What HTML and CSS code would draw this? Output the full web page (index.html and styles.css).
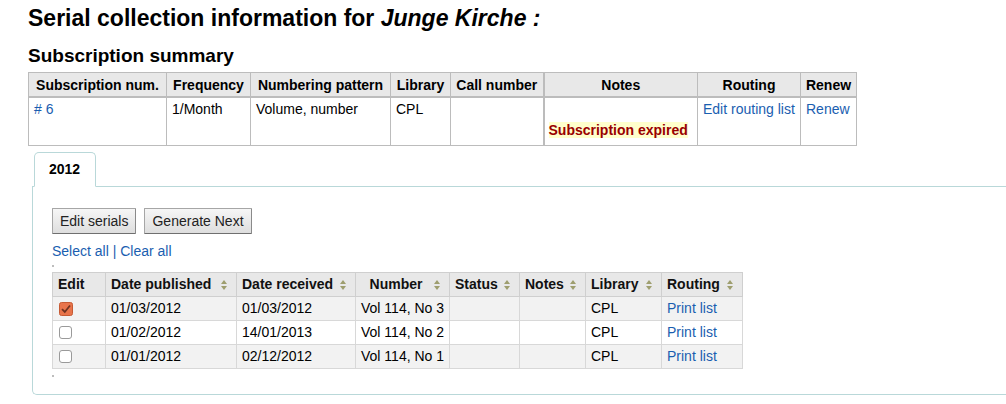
FILE: index.html
```html
<!DOCTYPE html>
<html lang="en">
<head>
<meta charset="utf-8">
<title>Serial collection information</title>
<link rel="stylesheet" href="styles.css">
</head>
<body>
<div class="page">
  <h1 class="title">Serial collection information for <i>Junge Kirche :</i></h1>
  <h2 class="subtitle">Subscription summary</h2>
  <table class="summary">
    <colgroup>
      <col class="s-c1"><col class="s-c2"><col class="s-c3"><col class="s-c4"><col class="s-c5"><col class="s-c6"><col class="s-c7"><col class="s-c8">
    </colgroup>
    <thead>
      <tr>
        <th>Subscription num.</th>
        <th>Frequency</th>
        <th>Numbering pattern</th>
        <th>Library</th>
        <th>Call number</th>
        <th class="notes-col">Notes</th>
        <th>Routing</th>
        <th>Renew</th>
      </tr>
    </thead>
    <tbody>
      <tr>
        <td><a href="#">#&nbsp;6</a></td>
        <td>1/Month</td>
        <td>Volume, number</td>
        <td>CPL</td>
        <td></td>
        <td class="notes-col"><div class="blank-line"></div><span class="problem">Subscription expired</span></td>
        <td><a href="#">Edit routing list</a></td>
        <td><a href="#">Renew</a></td>
      </tr>
    </tbody>
  </table>

  <div class="tabs">
    <ul class="tablist">
      <li class="tab">2012</li>
    </ul>
    <div class="panel">
      <div class="buttons">
        <button class="btn" type="button">Edit serials</button>
        <button class="btn" type="button">Generate Next</button>
      </div>
      <div class="selectall"><a href="#">Select all</a> | <a href="#">Clear all</a></div>
      <div class="dot"></div>
      <table class="issues">
        <colgroup>
          <col class="i-c1"><col class="i-c2"><col class="i-c3"><col class="i-c4"><col class="i-c5"><col class="i-c6"><col class="i-c7"><col class="i-c8">
        </colgroup>
        <thead>
          <tr>
            <th>Edit</th>
            <th class="sort">Date published</th>
            <th class="sort">Date received</th>
            <th class="sort center">Number</th>
            <th class="sort">Status</th>
            <th class="sort">Notes</th>
            <th class="sort">Library</th>
            <th class="sort">Routing</th>
          </tr>
        </thead>
        <tbody>
          <tr class="odd">
            <td><svg class="cb" width="14" height="14" viewBox="0 0 14 14"><rect x="0.5" y="0.5" width="13" height="13" rx="2" fill="#e8744b" stroke="#c65a34"/><path d="M3 7.2 L5.8 10 L11 3.5" fill="none" stroke="#6e3322" stroke-width="1.8"/></svg></td>
            <td>01/03/2012</td>
            <td>01/03/2012</td>
            <td>Vol 114, No 3</td>
            <td></td>
            <td></td>
            <td>CPL</td>
            <td><a href="#">Print list</a></td>
          </tr>
          <tr class="even">
            <td><svg class="cb" width="14" height="14" viewBox="0 0 14 14"><rect x="0.5" y="0.5" width="12" height="12" rx="2.5" fill="#fff" stroke="#9a9a9a"/></svg></td>
            <td>01/02/2012</td>
            <td>14/01/2013</td>
            <td>Vol 114, No 2</td>
            <td></td>
            <td></td>
            <td>CPL</td>
            <td><a href="#">Print list</a></td>
          </tr>
          <tr class="odd">
            <td><svg class="cb" width="14" height="14" viewBox="0 0 14 14"><rect x="0.5" y="0.5" width="12" height="12" rx="2.5" fill="#fff" stroke="#9a9a9a"/></svg></td>
            <td>01/01/2012</td>
            <td>02/12/2012</td>
            <td>Vol 114, No 1</td>
            <td></td>
            <td></td>
            <td>CPL</td>
            <td><a href="#">Print list</a></td>
          </tr>
        </tbody>
      </table>
      <div class="dot dot-bottom"></div>
    </div>
  </div>
</div>
</body>
</html>
```

FILE: styles.css
```css
html, body {
  margin: 0;
  padding: 0;
  overflow: hidden;
  background: #fff;
}
body {
  font-family: "Liberation Sans", Arial, sans-serif;
  font-size: 14px;
  color: #000;
}
a {
  color: #1a5eb0;
  text-decoration: none;
}
.page {
  padding-left: 28px;
}
.title {
  font-size: 23px;
  line-height: 26px;
  font-weight: bold;
  margin: 5px 0 0;
}
.subtitle {
  font-size: 19px;
  line-height: 22px;
  font-weight: bold;
  margin: 14px 0 5px;
}

/* summary table */
.summary {
  border-collapse: collapse;
  table-layout: fixed;
  width: 828px;
  border: 1px solid #bcbcbc;
}
.s-c1 { width: 138px; }
.s-c2 { width: 84px; }
.s-c3 { width: 140px; }
.s-c4 { width: 60px; }
.s-c5 { width: 93px; }
.s-c6 { width: 154px; }
.s-c7 { width: 103px; }
.s-c8 { width: 56px; }
.summary th {
  background: #e8e8e8;
  border: 1px solid #bcbcbc;
  border-bottom: 2px solid #bcbcbc;
  font-weight: bold;
  text-align: center;
  line-height: 20px;
  padding: 2px 4px 1px;
  white-space: nowrap;
}
.summary td {
  border: 1px solid #bcbcbc;
  vertical-align: top;
  line-height: 20px;
  padding: 1px 5px 5px;
  white-space: nowrap;
}
.summary .notes-col {
  border-left: 2px solid #bcbcbc;
  padding-left: 4px;
}
.blank-line {
  height: 21px;
}
.problem {
  background: #ffffcc;
  color: #990000;
  font-weight: bold;
}

/* tabs */
.tabs {
  margin: 6px 0 0 4px;
}
.tablist {
  list-style: none;
  margin: 0 0 -1px;
  padding: 0 0 0 2px;
  display: flex;
  position: relative;
  z-index: 1;
}
.tab {
  border: 1px solid #b9d8d9;
  border-bottom: 1px solid #fff;
  border-radius: 5px 5px 0 0;
  background: #fff;
  font-weight: bold;
  line-height: 33px;
  padding: 0 15px 0 14px;
}
.panel {
  border: 1px solid #b9d8d9;
  border-right: none;
  border-radius: 0 0 0 5px;
  padding: 21px 19px 17px;
}
.buttons {
  display: flex;
  gap: 8px;
}
.btn {
  font-family: "Liberation Sans", Arial, sans-serif;
  font-size: 14px;
  color: #222;
  height: 26px;
  padding: 0 7px;
  border: 1px solid #a6a6a6;
  border-bottom-color: #6f6f6f;
  border-right-color: #8a8a8a;
  border-radius: 1px;
  background: linear-gradient(#f6f6f6, #dedede);
}
.selectall {
  margin-top: 9px;
  line-height: 17px;
  color: #1a5eb0;
}
.dot {
  width: 2px;
  height: 2px;
  background: #bdbdbd;
  margin-top: 5px;
  margin-bottom: 5px;
}
.dot-bottom {
  margin-top: 6px;
  margin-bottom: 0;
}

/* issues table */
.issues {
  border-collapse: collapse;
  table-layout: fixed;
  width: 690px;
  border: 1px solid #cfcfcf;
}
.i-c1 { width: 53px; }
.i-c2 { width: 131px; }
.i-c3 { width: 119px; }
.i-c4 { width: 94px; }
.i-c5 { width: 70px; }
.i-c6 { width: 66px; }
.i-c7 { width: 76px; }
.i-c8 { width: 81px; }
.issues th {
  background: #e8e8e8;
  border: 1px solid #cfcfcf;
  font-weight: bold;
  text-align: left;
  line-height: 17px;
  padding: 3px 5px;
  white-space: nowrap;
  color: #111;
}
.issues th.sort {
  position: relative;
  padding-right: 18px;
}
.issues th.center {
  text-align: center;
}
.issues th.sort::before,
.issues th.sort::after {
  content: "";
  position: absolute;
  right: 9px;
  width: 0;
  height: 0;
  border-left: 3.5px solid transparent;
  border-right: 3.5px solid transparent;
}
.issues th.sort::before {
  top: 7px;
  border-bottom: 4px solid #9e9e6e;
}
.issues th.sort::after {
  top: 13px;
  border-top: 4px solid #9e9e6e;
}
.issues td {
  border: 1px solid #d8d8d8;
  line-height: 17px;
  padding: 3px 5px;
  white-space: nowrap;
}
.issues tr.odd td {
  background: #f2f2f2;
}
.issues tr.even td {
  background: #fff;
}
.cb {
  display: block;
  margin-left: 1px;
}
```
